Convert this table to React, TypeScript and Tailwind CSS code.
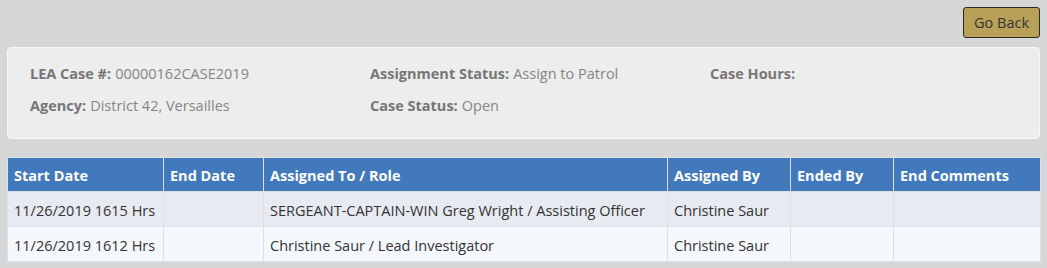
import React from 'react'

interface AssignmentRow {
  startDate: string
  endDate: string
  assignedTo: string
  assignedBy: string
  endedBy: string
  endComments: string
}

const rows: AssignmentRow[] = [
  {
    startDate: '11/26/2019 1615 Hrs',
    endDate: '',
    assignedTo: 'SERGEANT-CAPTAIN-WIN Greg Wright / Assisting Officer',
    assignedBy: 'Christine Saur',
    endedBy: '',
    endComments: '',
  },
  {
    startDate: '11/26/2019 1612 Hrs',
    endDate: '',
    assignedTo: 'Christine Saur / Lead Investigator',
    assignedBy: 'Christine Saur',
    endedBy: '',
    endComments: '',
  },
]

function Field({ label, value }: { label: string; value?: string }) {
  return (
    <div className="h-[32px] flex items-center">
      <span className="font-bold text-[#767676]">{label}</span>
      {value && <span className="ml-[4px] text-[#858585]">{value}</span>}
    </div>
  )
}

export default function App() {
  return (
    <div
      className="w-[1047px] h-[268px] bg-[#d5d6d6] px-[7px] pt-[7px] text-[14.5px]"
      style={{ fontFamily: '"Open Sans", "Noto Sans", sans-serif' }}
    >
      {/* Top actions */}
      <div className="flex justify-end">
        <button className="h-[31px] w-[77px] bg-[#b8a059] border border-[#2c2a22] rounded-[3px] text-[#333] text-[14.5px]">
          Go Back
        </button>
      </div>

      {/* Case summary */}
      <div className="mt-[9px] h-[92px] bg-[#ededed] border border-[#f7f7f7] rounded-[4px] pl-[22px] pt-[10px] grid grid-cols-[340px_340px_1fr]">
        <div>
          <Field label="LEA Case #:" value="00000162CASE2019" />
          <Field label="Agency:" value="District 42, Versailles" />
        </div>
        <div>
          <Field label="Assignment Status:" value="Assign to Patrol" />
          <Field label="Case Status:" value="Open" />
        </div>
        <div>
          <Field label="Case Hours:" />
        </div>
      </div>

      {/* Assignment history */}
      <table className="mt-[18px] w-[1033px] table-fixed border-collapse border border-[#dde1e7] text-[#333]">
        <colgroup>
          <col className="w-[156px]" />
          <col className="w-[100px]" />
          <col className="w-[404px]" />
          <col className="w-[123px]" />
          <col className="w-[103px]" />
          <col className="w-[147px]" />
        </colgroup>
        <thead>
          <tr className="bg-[#4279bd] text-white h-[34px]">
            <th className="text-left font-bold px-[6px] pt-[3px] border border-[#dde1e7]">Start Date</th>
            <th className="text-left font-bold px-[6px] pt-[3px] border border-[#dde1e7]">End Date</th>
            <th className="text-left font-bold px-[6px] pt-[3px] border border-[#dde1e7]">Assigned To / Role</th>
            <th className="text-left font-bold px-[6px] pt-[3px] border border-[#dde1e7]">Assigned By</th>
            <th className="text-left font-bold px-[6px] pt-[3px] border border-[#dde1e7]">Ended By</th>
            <th className="text-left font-bold px-[6px] pt-[3px] border border-[#dde1e7]">End Comments</th>
          </tr>
        </thead>
        <tbody>
          {rows.map((row, i) => (
            <tr key={i} className={`h-[35px] ${i % 2 === 0 ? 'bg-[#e7eaf0]' : 'bg-[#f4f7fc]'}`}>
              <td className="px-[6px] pt-[3px] border border-[#dde1e7] whitespace-nowrap">{row.startDate}</td>
              <td className="px-[6px] pt-[3px] border border-[#dde1e7]">{row.endDate}</td>
              <td className="px-[6px] pt-[3px] border border-[#dde1e7] whitespace-nowrap">{row.assignedTo}</td>
              <td className="px-[6px] pt-[3px] border border-[#dde1e7] whitespace-nowrap">{row.assignedBy}</td>
              <td className="px-[6px] pt-[3px] border border-[#dde1e7]">{row.endedBy}</td>
              <td className="px-[6px] pt-[3px] border border-[#dde1e7]">{row.endComments}</td>
            </tr>
          ))}
        </tbody>
      </table>
    </div>
  )
}
